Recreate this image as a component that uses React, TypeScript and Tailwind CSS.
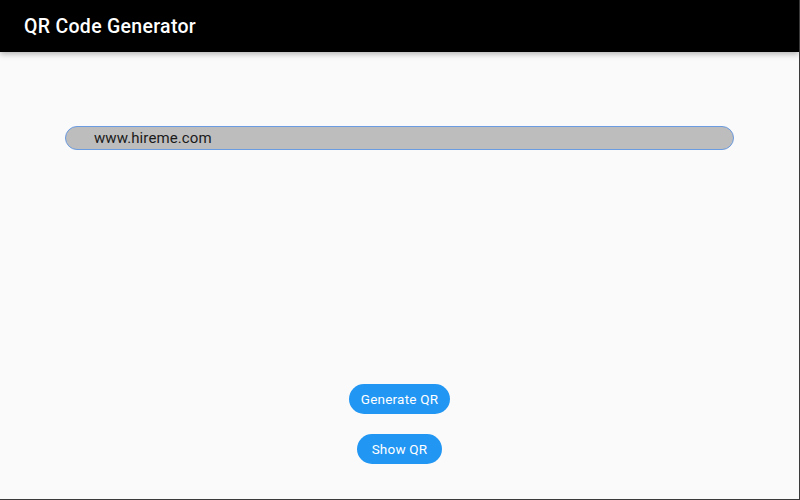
import { useState } from 'react'

export default function App() {
  const [url, setUrl] = useState('www.hireme.com')

  return (
    <div className="w-[800px] h-[500px] flex flex-col bg-[#fafafa] border-r border-b border-[#3a3a3a] overflow-hidden" style={{ fontFamily: 'Roboto, "Noto Sans", sans-serif' }}>
      {/* App bar */}
      <div className="h-[52px] shrink-0 bg-black flex items-center px-6 pt-[2px] shadow-[0_2px_6px_rgba(0,0,0,0.3)] relative z-10">
        <h1 className="text-white text-[19.5px] font-medium tracking-[0.3px]">QR Code Generator</h1>
      </div>

      {/* Body */}
      <div className="flex-1 flex flex-col items-center">
        <div className="w-full px-[65px] pt-[74px]">
          <input
            value={url}
            onChange={e => setUrl(e.target.value)}
            autoFocus
            className="w-full h-[24px] rounded-full bg-[#bdbdbd] border border-[#6b9be0] pl-[28px] text-[15px] text-[#1a1a1a] tracking-[0.1px] outline-none caret-[#3b6fc4] leading-none"
          />
        </div>

        <div className="flex-1" />

        <div className="flex flex-col items-center gap-[20px] pb-[35px]">
          <button className="h-[30px] px-[12px] rounded-full bg-[#2196f3] text-white text-[13.5px] tracking-[0.2px]">Generate QR</button>
          <button className="h-[30px] px-[15px] rounded-full bg-[#2196f3] text-white text-[13.5px] tracking-[0.2px]">Show QR</button>
        </div>
      </div>
    </div>
  )
}
